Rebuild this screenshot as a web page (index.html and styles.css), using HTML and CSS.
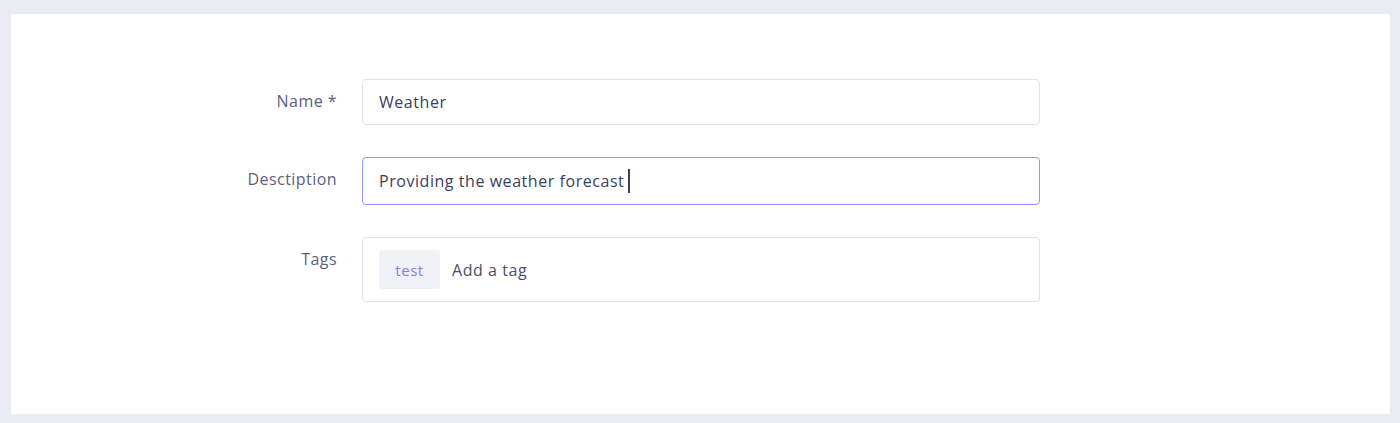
FILE: index.html
```html
<!DOCTYPE html>
<html lang="en">
<head>
<meta charset="utf-8">
<title>Form</title>
<link rel="stylesheet" href="styles.css">
</head>
<body>
<div class="card">
  <form class="form">
    <div class="row">
      <label class="label">Name *</label>
      <div class="field">Weather</div>
    </div>
    <div class="row">
      <label class="label">Desctiption</label>
      <div class="field focus">Providing the weather forecast<span class="caret"></span></div>
    </div>
    <div class="row">
      <label class="label">Tags</label>
      <div class="field tags">
        <span class="chip">test</span>
        <span class="placeholder">Add a tag</span>
      </div>
    </div>
  </form>
</div>
</body>
</html>
```
FILE: styles.css
```css
html, body {
  margin: 0;
  padding: 0;
}
body {
  background: #ebecf3;
  font-family: "Open Sans", "Liberation Sans", sans-serif;
  height: 423px;
  overflow: hidden;
}
.card {
  background: #ffffff;
  margin: 14px 10px 0 11px;
  height: 400px;
  box-sizing: border-box;
  padding-top: 65px;
}
.form {
  display: flex;
  flex-direction: column;
  gap: 32px;
}
.row {
  display: grid;
  grid-template-columns: 326px 678px;
  column-gap: 25px;
  align-items: start;
}
.label {
  text-align: right;
  font-size: 16px;
  letter-spacing: 0.45px;
  color: #5b6080;
  line-height: 22px;
  padding-top: 11px;
}
.field {
  box-sizing: border-box;
  height: 46px;
  border: 1px solid #dfe0ea;
  border-radius: 4px;
  padding: 0 16px;
  display: flex;
  align-items: center;
  font-size: 16px;
  letter-spacing: 0.55px;
  color: #3b3f5c;
}
.field.focus {
  border-color: #8f97f1;
  height: 48px;
}
.caret {
  display: inline-block;
  width: 1.5px;
  height: 24px;
  background: #3b3f5c;
  margin-left: 4px;
}
.field.tags {
  height: 65px;
  padding-left: 16px;
  gap: 12px;
}
.chip {
  background: #f0f1f7;
  color: #7c84de;
  border-radius: 3px;
  width: 61px;
  height: 39px;
  display: flex;
  align-items: center;
  justify-content: center;
  font-size: 15px;
  letter-spacing: 0.5px;
}
.placeholder {
  color: #4a4e6a;
}
```
